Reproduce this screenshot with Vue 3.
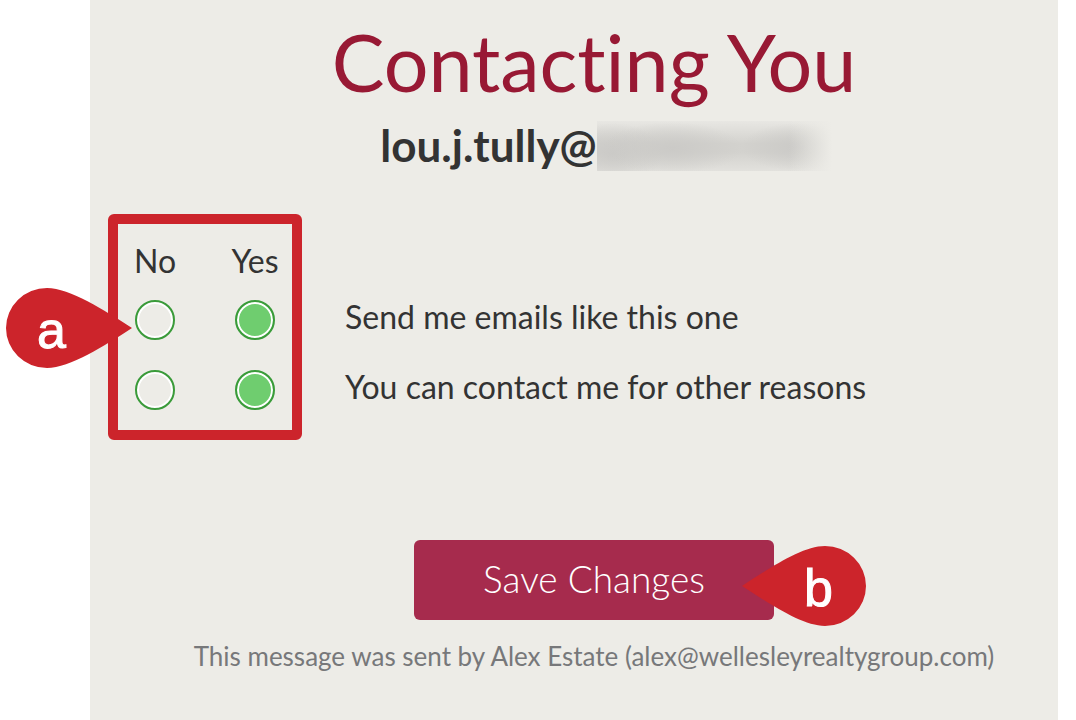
<script setup>
import { reactive } from 'vue'

const sender = 'Alex Estate'
const senderEmail = 'alex@wellesleyrealtygroup.com'
const preferences = reactive([
  { id: 'similar', label: 'Send me emails like this one', value: 'yes' },
  { id: 'other', label: 'You can contact me for other reasons', value: 'yes' },
])
</script>

<template>
  <main class="page">
    <form class="panel" @submit.prevent>
      <h1 class="title">Contacting You</h1>
      <p class="address">lou.j.tully@<span class="redacted" aria-hidden="true"></span></p>

      <div class="choices">
        <table class="grid">
          <thead>
            <tr>
              <th id="col-no" scope="col">No</th>
              <th id="col-yes" scope="col">Yes</th>
              <td></td>
            </tr>
          </thead>
          <tbody>
            <tr v-for="item in preferences" :key="item.id">
              <td>
                <input v-model="item.value" type="radio" :name="item.id" value="no" :aria-labelledby="`col-no label-${item.id}`" />
              </td>
              <td>
                <input :id="item.id" v-model="item.value" type="radio" :name="item.id" value="yes" :aria-labelledby="`col-yes label-${item.id}`" />
              </td>
              <td class="text"><label :id="`label-${item.id}`" :for="item.id">{{ item.label }}</label></td>
            </tr>
          </tbody>
        </table>
        <div class="frame"></div>
        <div class="pin pin-a">
          <svg width="126" height="80" viewBox="0 0 126 80"><path d="M126 40C98 22 64 0 41 0A41 40 0 0 0 41 80C64 80 98 58 126 40Z" /></svg>
          <span>a</span>
        </div>
      </div>

      <div class="action">
        <button type="submit" class="save">Save Changes</button>
        <div class="pin pin-b">
          <svg width="124" height="80" viewBox="0 0 124 80"><path d="M0 40C28 22 60 0 83 0A41 40 0 0 1 83 80C60 80 28 58 0 40Z" /></svg>
          <span>b</span>
        </div>
      </div>
      <p class="note">This message was sent by {{ sender }} ({{ senderEmail }})</p>
    </form>
  </main>
</template>

<style>
body {
  background: #fff;
}
</style>

<style scoped>
.page {
  padding: 0 18px 0 90px;
  font-family: Lato, "Open Sans", sans-serif;
  font-variant-ligatures: none;
  color: #333;
}
.panel {
  box-sizing: border-box;
  min-height: 100vh;
  padding: 16px 0 0 40px;
  background: #edece7;
}
.title {
  margin: 0;
  font-size: 79px;
  line-height: 92px;
  font-weight: 400;
  text-align: center;
  color: #981934;
}
.address {
  display: flex;
  justify-content: center;
  align-items: flex-end;
  margin: 11px 0 0;
  font-size: 44px;
  line-height: 52px;
  font-weight: 700;
}
.redacted {
  width: 240px;
  height: 50px;
  margin-right: -29px;
  background:
    linear-gradient(90deg, transparent 80%, #edece7 98%),
    radial-gradient(56px 24px at 200px 26px, #cbcac7 0%, transparent 100%),
    radial-gradient(70px 26px at 75px 27px, #cbcac7 0%, transparent 100%),
    radial-gradient(50px 30px at 16px 32px, #cbcac7 0%, transparent 100%),
    linear-gradient(180deg, #e8e7e3 0%, #d3d2ce 45%, #d3d2ce 62%, #e2e1dd 100%);
}
.choices {
  position: relative;
  margin: 68px 0 0 -25px;
}
.grid {
  border-collapse: collapse;
  font-size: 32px;
  line-height: 40px;
}
.grid th,
.grid td {
  min-width: 100px;
  box-sizing: border-box;
  padding: 0;
  font-weight: 400;
  text-align: left;
}
.grid th {
  height: 46px;
  padding-bottom: 2px;
  text-align: center;
}
.grid tbody td {
  height: 70px;
}
.grid td {
  text-align: center;
}
.grid .text {
  padding: 0 0 6px 40px;
  text-align: left;
}
.grid input {
  appearance: none;
  display: block;
  width: 40px;
  height: 40px;
  margin: 0 auto;
  border: 2px solid #3a9b3a;
  border-radius: 50%;
  background: #edece7;
  box-shadow: inset 0 0 0 2px #fff;
}
.grid input:checked {
  background: #6fcd6f;
}
.frame {
  position: absolute;
  top: -25px;
  left: 3px;
  box-sizing: border-box;
  width: 194px;
  height: 226px;
  border: 10px solid #cc242b;
  border-radius: 6px;
  pointer-events: none;
}
.pin {
  position: absolute;
  height: 80px;
  pointer-events: none;
}
.pin svg {
  display: block;
  fill: #cc242b;
}
.pin span {
  position: absolute;
  top: 10px;
  font: 52px/64px "Liberation Sans", Arial, sans-serif;
  color: #fff;
  -webkit-text-stroke: 1px #fff;
}
.pin-a {
  top: 49px;
  left: -99px;
}
.pin-a span {
  left: 31px;
}
.pin-b {
  top: 6px;
  left: 328px;
}
.pin-b span {
  left: 62px;
}
.action {
  position: relative;
  width: 360px;
  margin: 115px auto 0;
}
.save {
  display: block;
  width: 100%;
  height: 80px;
  padding: 0 0 2px;
  border: 0;
  border-radius: 6px;
  background: #a62b4d;
  color: #fff;
  font: 300 37px/40px Lato, "Open Sans", sans-serif;
}
.note {
  margin: 20px 0 0;
  font-size: 26px;
  line-height: 32px;
  text-align: center;
  color: #77787a;
}
</style>
